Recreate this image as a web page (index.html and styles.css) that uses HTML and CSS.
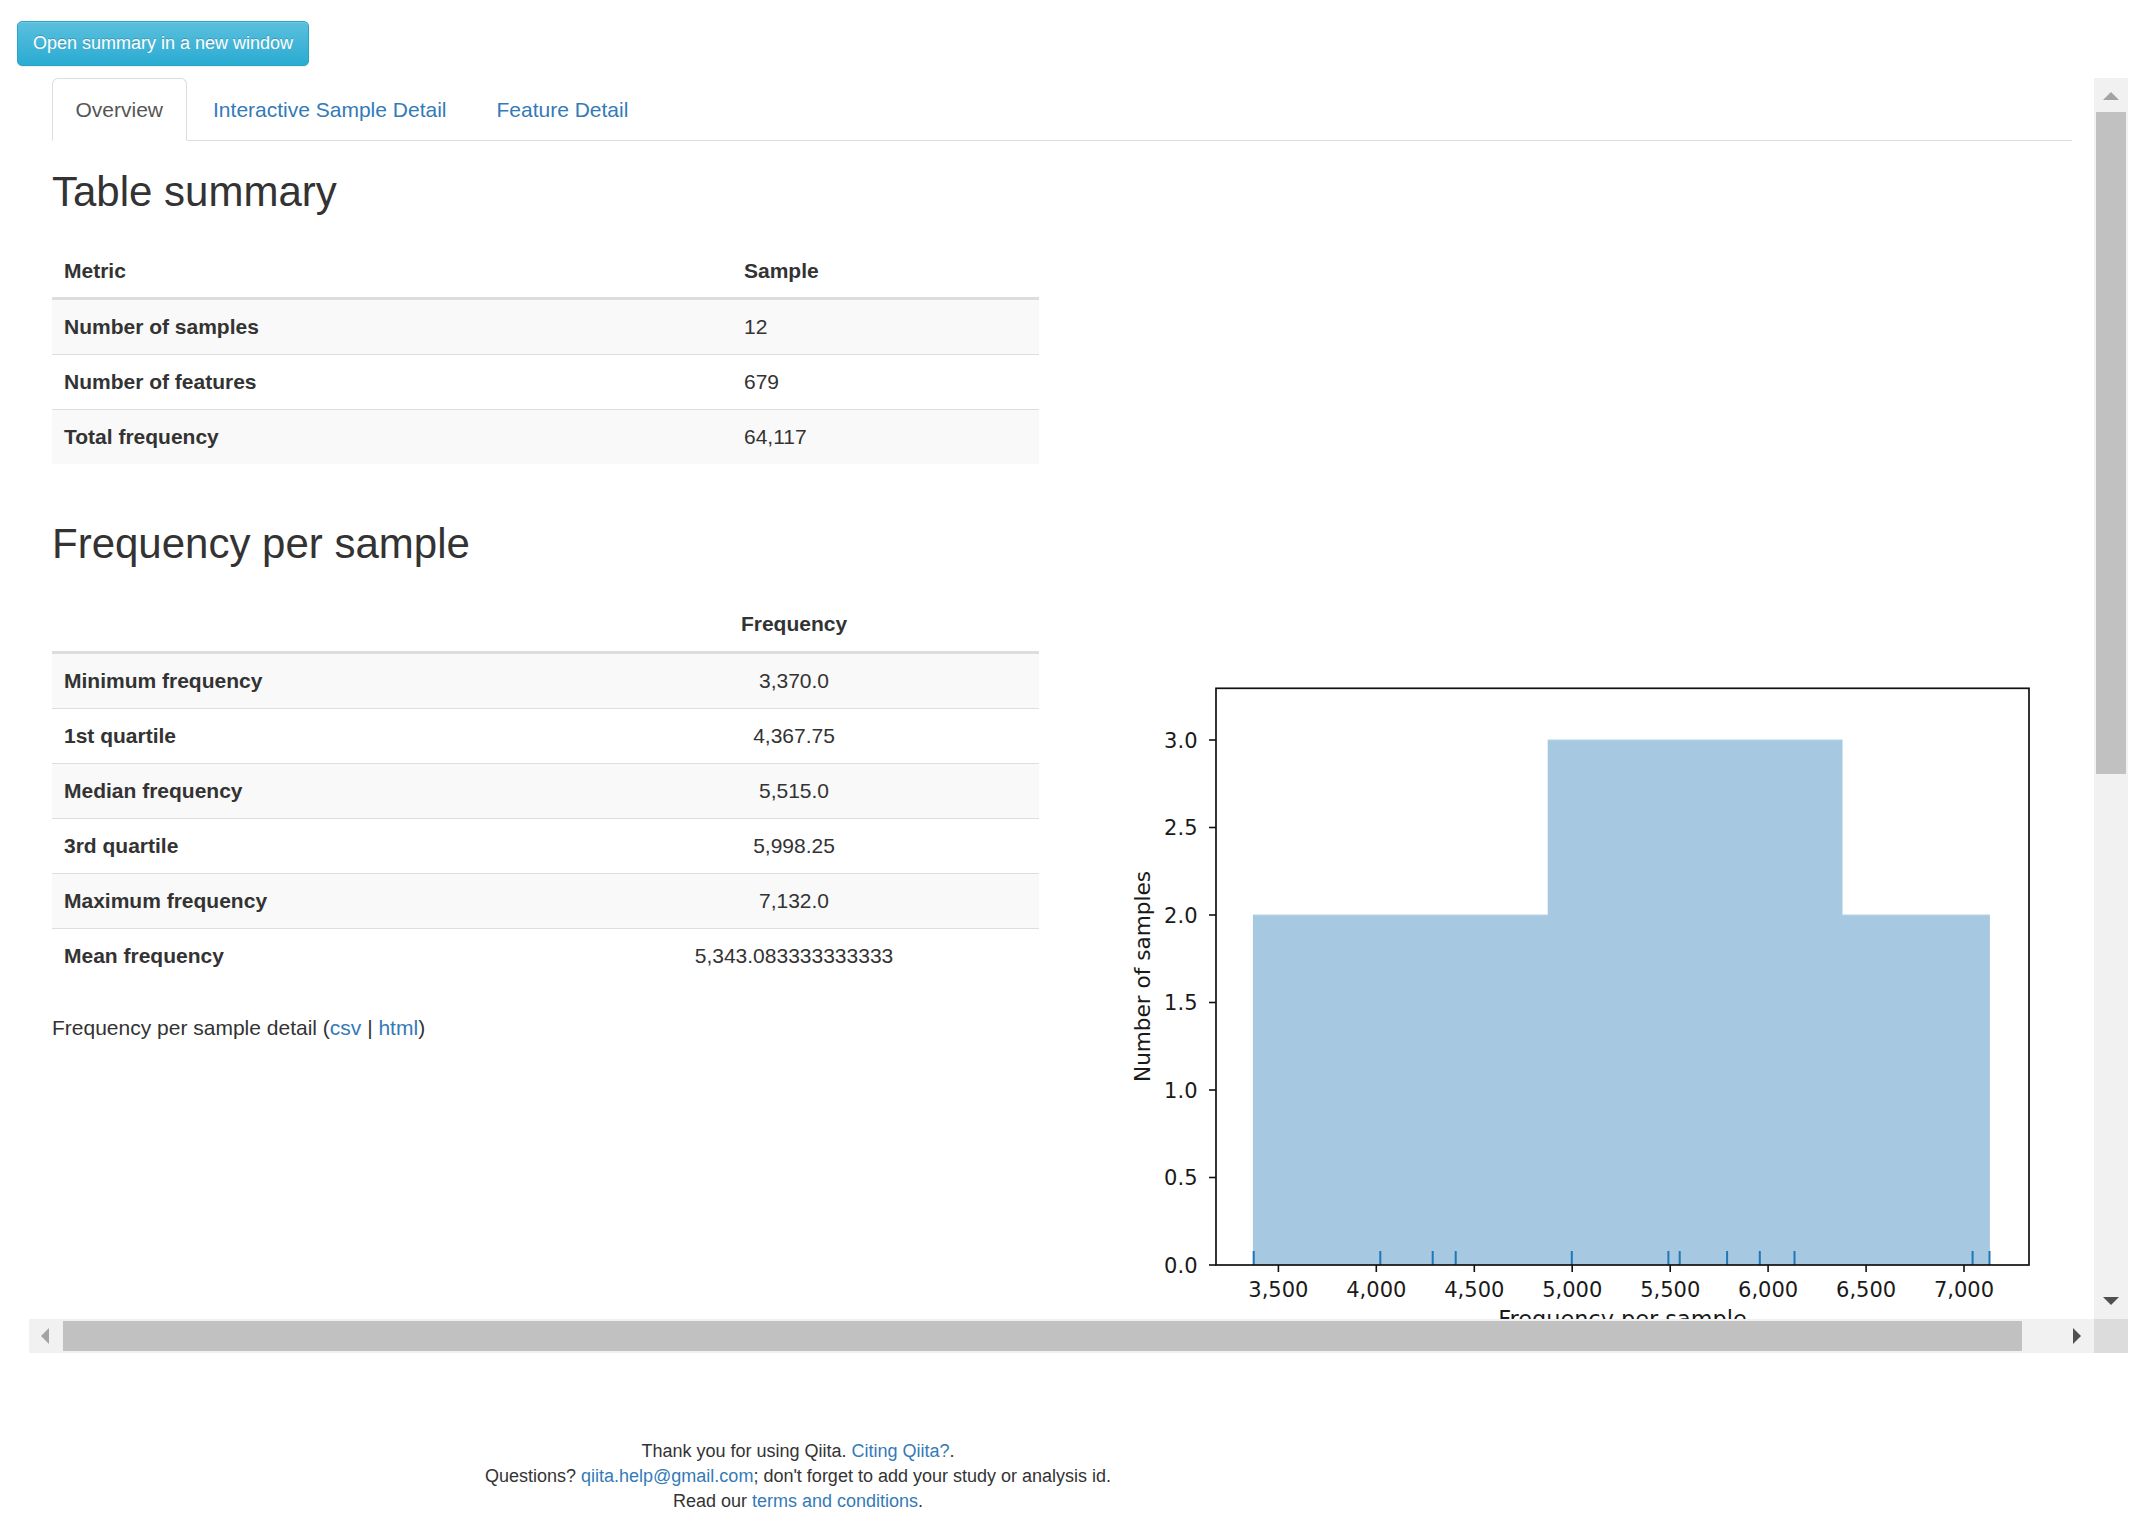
FILE: index.html
```html
<!DOCTYPE html>
<html>
<head>
<meta charset="utf-8">
<title>Summary</title>
<link rel="stylesheet" href="styles.css">
</head>
<body>
<div class="page">
  <button class="btn-info" type="button">Open summary in a new window</button>
  <div class="frame">
    <div class="viewport">
      <div class="container">
        <ul class="nav-tabs">
          <li class="active"><a>Overview</a></li>
          <li><a>Interactive Sample Detail</a></li>
          <li><a>Feature Detail</a></li>
        </ul>
        <div class="tab-content">
          <h2 class="h-first">Table summary</h2>
          <table class="table t1">
            <thead>
              <tr><th class="c1">Metric</th><th>Sample</th></tr>
            </thead>
            <tbody>
              <tr><th class="c1">Number of samples</th><td>12</td></tr>
              <tr><th class="c1">Number of features</th><td>679</td></tr>
              <tr><th class="c1">Total frequency</th><td>64,117</td></tr>
            </tbody>
          </table>
          <h2 class="h-second">Frequency per sample</h2>
          <div class="row">
            <div class="col-left">
              <table class="table t2">
                <thead>
                  <tr><th class="c1"></th><th class="center">Frequency</th></tr>
                </thead>
                <tbody>
                  <tr><th class="c1">Minimum frequency</th><td class="center">3,370.0</td></tr>
                  <tr><th class="c1">1st quartile</th><td class="center">4,367.75</td></tr>
                  <tr><th class="c1">Median frequency</th><td class="center">5,515.0</td></tr>
                  <tr><th class="c1">3rd quartile</th><td class="center">5,998.25</td></tr>
                  <tr><th class="c1">Maximum frequency</th><td class="center">7,132.0</td></tr>
                  <tr><th class="c1">Mean frequency</th><td class="center">5,343.083333333333</td></tr>
                </tbody>
              </table>
              <p class="detail">Frequency per sample detail (<a>csv</a> | <a>html</a>)</p>
            </div>
            <div class="col-right">
              <svg class="chart" width="1050" height="760" viewBox="1084 598 1050 760" xmlns="http://www.w3.org/2000/svg">
                <path d="M1252.9 1265 V915 H1547.7 V740 H1842.5 V915 H1989.9 V1265 Z" fill="#a6c8e1"/>
                <path d="M1252.9 915 H1547.7 M1547.7 740 H1842.5 M1842.5 915 H1989.9" stroke="#b7d3e8" stroke-width="1.2" fill="none"/>
                <g stroke="#1f77b4" stroke-width="2">
                  <line x1="1253.7" y1="1251" x2="1253.7" y2="1265"/>
                  <line x1="1380.3" y1="1251" x2="1380.3" y2="1265"/>
                  <line x1="1432.7" y1="1251" x2="1432.7" y2="1265"/>
                  <line x1="1455.7" y1="1251" x2="1455.7" y2="1265"/>
                  <line x1="1571.8" y1="1251" x2="1571.8" y2="1265"/>
                  <line x1="1668.4" y1="1251" x2="1668.4" y2="1265"/>
                  <line x1="1679.7" y1="1251" x2="1679.7" y2="1265"/>
                  <line x1="1727.1" y1="1251" x2="1727.1" y2="1265"/>
                  <line x1="1759.8" y1="1251" x2="1759.8" y2="1265"/>
                  <line x1="1794.5" y1="1251" x2="1794.5" y2="1265"/>
                  <line x1="1972.6" y1="1251" x2="1972.6" y2="1265"/>
                  <line x1="1989.5" y1="1251" x2="1989.5" y2="1265"/>
                </g>
                <rect x="1216" y="688.3" width="813" height="576.7" fill="none" stroke="#111" stroke-width="1.7"/>
                <g stroke="#111" stroke-width="1.6">
                  <line x1="1209" y1="1265" x2="1216" y2="1265"/>
                  <line x1="1209" y1="1177.5" x2="1216" y2="1177.5"/>
                  <line x1="1209" y1="1090" x2="1216" y2="1090"/>
                  <line x1="1209" y1="1002.5" x2="1216" y2="1002.5"/>
                  <line x1="1209" y1="915" x2="1216" y2="915"/>
                  <line x1="1209" y1="827.5" x2="1216" y2="827.5"/>
                  <line x1="1209" y1="740" x2="1216" y2="740"/>
                  <line x1="1278.4" y1="1265" x2="1278.4" y2="1272"/>
                  <line x1="1376.3" y1="1265" x2="1376.3" y2="1272"/>
                  <line x1="1474.3" y1="1265" x2="1474.3" y2="1272"/>
                  <line x1="1572.2" y1="1265" x2="1572.2" y2="1272"/>
                  <line x1="1670.2" y1="1265" x2="1670.2" y2="1272"/>
                  <line x1="1768.1" y1="1265" x2="1768.1" y2="1272"/>
                  <line x1="1866.1" y1="1265" x2="1866.1" y2="1272"/>
                  <line x1="1964" y1="1265" x2="1964" y2="1272"/>
                </g>
                <g class="ticklabels" text-anchor="end">
                  <text x="1197.5" y="1272.6">0.0</text>
                  <text x="1197.5" y="1185.1">0.5</text>
                  <text x="1197.5" y="1097.6">1.0</text>
                  <text x="1197.5" y="1010.1">1.5</text>
                  <text x="1197.5" y="922.6">2.0</text>
                  <text x="1197.5" y="835.1">2.5</text>
                  <text x="1197.5" y="747.6">3.0</text>
                </g>
                <g class="ticklabels" text-anchor="middle">
                  <text x="1278.4" y="1297">3,500</text>
                  <text x="1376.3" y="1297">4,000</text>
                  <text x="1474.3" y="1297">4,500</text>
                  <text x="1572.2" y="1297">5,000</text>
                  <text x="1670.2" y="1297">5,500</text>
                  <text x="1768.1" y="1297">6,000</text>
                  <text x="1866.1" y="1297">6,500</text>
                  <text x="1964" y="1297">7,000</text>
                </g>
                <text class="axislabel xlabel" x="1622.5" y="1326.5" text-anchor="middle">Frequency per sample</text>
                <text class="axislabel" transform="translate(1150 976.5) rotate(-90)" text-anchor="middle">Number of samples</text>
              </svg>
            </div>
          </div>
        </div>
      </div>
    </div>
    <div class="vscroll">
      <div class="sb-btn up"><span class="tri tri-up off"></span></div>
      <div class="vtrack"><div class="vthumb"></div></div>
      <div class="sb-btn down"><span class="tri tri-down"></span></div>
    </div>
    <div class="hscroll">
      <div class="sb-btn left"><span class="tri tri-left off"></span></div>
      <div class="htrack"><div class="hthumb"></div></div>
      <div class="sb-btn right"><span class="tri tri-right"></span></div>
    </div>
    <div class="corner"></div>
  </div>
  <footer class="footer">
    Thank you for using Qiita. <a>Citing Qiita?</a>.<br>
    Questions? <a>qiita.help@gmail.com</a>; don't forget to add your study or analysis id.<br>
    Read our <a>terms and conditions</a>.
  </footer>
</div>
</body>
</html>
```

FILE: styles.css
```css
html, body {
  margin: 0;
  padding: 0;
  background: #fff;
}

body {
  font-family: "Liberation Sans", Arial, Helvetica, sans-serif;
  font-size: 18px;
  line-height: 25px;
  color: #333;
}

a {
  color: #337ab7;
  text-decoration: none;
}

.page {
  display: flex;
  flex-direction: column;
  align-items: flex-start;
}

.btn-info {
  margin: 21px 0 0 17px;
  padding: 9px 15px;
  height: 45px;
  font-family: "Liberation Sans", Arial, sans-serif;
  font-size: 18px;
  line-height: 25px;
  color: #fff;
  text-shadow: 0 -1px 0 rgba(0, 0, 0, 0.2);
  background-image: linear-gradient(to bottom, #5bc0de 0, #2aabd2 100%);
  border: 1px solid #28a4c9;
  border-radius: 5px;
  box-shadow: inset 0 1px 0 rgba(255, 255, 255, 0.15), 0 1px 1px rgba(0, 0, 0, 0.075);
  white-space: nowrap;
}

/* Embedded frame */
.frame {
  margin: 12px 0 0 29px;
  display: grid;
  grid-template-columns: 2065px 34px;
  grid-template-rows: 1241px 34px;
}

.viewport {
  overflow: hidden;
  background: #fff;
  font-size: 21px;
  line-height: 29.4px;
}

.container {
  padding: 0 22px 0 23px;
}

.nav-tabs {
  list-style: none;
  margin: 0;
  padding: 0;
  display: flex;
  border-bottom: 1px solid #ddd;
}

.nav-tabs li {
  margin: 0 3px -1px 0;
}

.nav-tabs a {
  display: block;
  padding: 16px 22.5px 16px;
  line-height: 29px;
  border: 1px solid transparent;
  border-radius: 6px 6px 0 0;
  color: #337ab7;
}

.nav-tabs li.active a {
  color: #555;
  background: #fff;
  border-color: #ddd #ddd transparent;
}

h2 {
  font-size: 42px;
  line-height: 45.65px;
  font-weight: normal;
  color: #333;
  margin: 0;
}

.h-first {
  margin: 27.6px 0 29.5px;
}

.h-second {
  margin: 0 0 30.5px;
}

.table {
  width: 987px;
  border-collapse: separate;
  border-spacing: 0;
  font-size: 21px;
  line-height: 29.4px;
}

.t1 {
  margin-bottom: 57.6px;
}

.t2 {
  margin-bottom: 30px;
}

.t1 .c1 {
  width: 656px;
}

.t2 .c1 {
  width: 473px;
}

.table th,
.table td {
  padding: 12.3px 12px;
  text-align: left;
  vertical-align: top;
}

.table th {
  font-weight: bold;
}

.table td {
  font-weight: normal;
}

.table thead th {
  padding: 11.8px 12px;
  border-bottom: 3px solid #ddd;
}

.table tbody tr + tr > * {
  border-top: 1px solid #ddd;
}

.table tbody tr:nth-child(odd) {
  background: #f9f9f9;
}

.table .center {
  text-align: center;
}

.row {
  display: flex;
  gap: 45px;
}

.col-left {
  flex: 0 0 987px;
}

.col-right {
  flex: 0 0 1050px;
}

.detail {
  margin: 0;
}

.chart {
  display: block;
}

.ticklabels text {
  font-family: "DejaVu Sans", sans-serif;
  font-size: 21px;
  fill: #1a1a1a;
}

.axislabel {
  font-family: "DejaVu Sans", sans-serif;
  font-size: 21.6px;
  fill: #1a1a1a;
}

.xlabel {
  font-size: 22.4px;
}

/* Scrollbars */
.vscroll {
  display: flex;
  flex-direction: column;
  background: #f1f1f1;
}

.hscroll {
  display: flex;
  background: #f1f1f1;
}

.corner {
  background: #dcdcdc;
}

.sb-btn {
  flex: 0 0 34px;
  height: 34px;
  display: flex;
  box-sizing: border-box;
}

.sb-btn.up {
  justify-content: center;
  padding-top: 14px;
}

.sb-btn.down {
  justify-content: center;
  padding-top: 12px;
}

.sb-btn.left {
  padding: 9px 0 0 12px;
}

.sb-btn.right {
  padding: 9px 0 0 13px;
}

.vtrack {
  flex: 1;
}

.vthumb {
  height: 662px;
  margin: 0 2px;
  background: #c1c1c1;
}

.htrack {
  flex: 1;
}

.hthumb {
  width: 1959px;
  height: 30px;
  margin: 2px 0;
  background: #c1c1c1;
}

.tri {
  display: block;
  width: 0;
  height: 0;
}

.tri-up {
  border-left: 8px solid transparent;
  border-right: 8px solid transparent;
  border-bottom: 8px solid #505050;
}

.tri-down {
  border-left: 8px solid transparent;
  border-right: 8px solid transparent;
  border-top: 8px solid #505050;
}

.tri-left {
  border-top: 8px solid transparent;
  border-bottom: 8px solid transparent;
  border-right: 8px solid #505050;
}

.tri-right {
  border-top: 8px solid transparent;
  border-bottom: 8px solid transparent;
  border-left: 8px solid #505050;
}

.tri-up.off {
  border-bottom-color: #a3a3a3;
}

.tri-left.off {
  border-right-color: #a3a3a3;
}

/* Footer */
.footer {
  width: 1596px;
  margin-top: 86px;
  text-align: center;
  font-size: 18px;
  line-height: 25px;
}
```
